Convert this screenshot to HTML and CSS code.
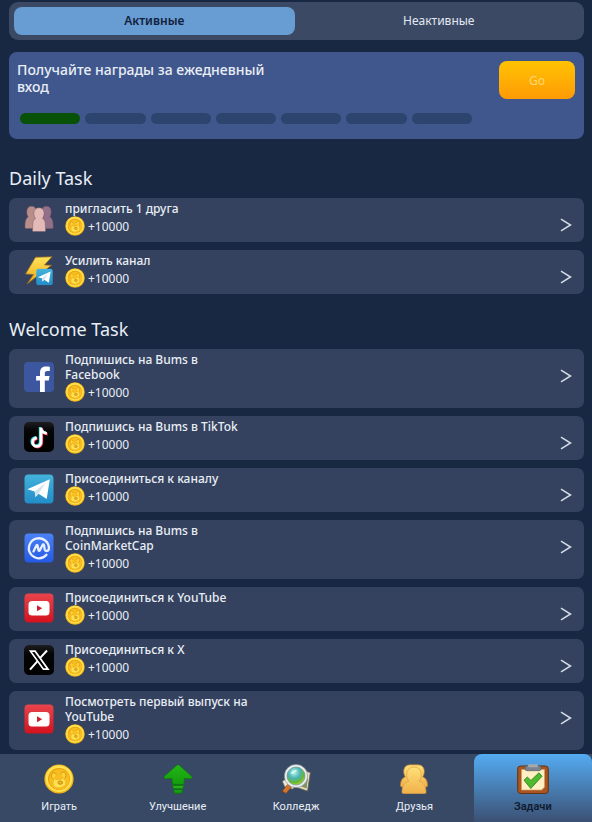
FILE: index.html
```html
<!DOCTYPE html>
<html lang="ru">
<head>
<meta charset="utf-8">
<meta name="viewport" content="width=device-width, initial-scale=1">
<title>Задачи</title>
<link rel="stylesheet" href="styles.css">
</head>
<body>
<svg class="sprite" aria-hidden="true">
  <defs>
    <linearGradient id="g-tg" x1="0" y1="0" x2="0" y2="1"><stop offset="0" stop-color="#43b3dc"/><stop offset="1" stop-color="#238cc7"/></linearGradient>
    <linearGradient id="g-cmc" x1="0" y1="0" x2="0" y2="1"><stop offset="0" stop-color="#4b82f5"/><stop offset="1" stop-color="#2459e4"/></linearGradient>
    <linearGradient id="g-yt" x1="0" y1="0" x2="0" y2="1"><stop offset="0" stop-color="#e9444c"/><stop offset="1" stop-color="#d4121e"/></linearGradient>
    <linearGradient id="g-black" x1="0" y1="0" x2="0" y2="1"><stop offset="0" stop-color="#1d1d20"/><stop offset="0.3" stop-color="#050506"/><stop offset="1" stop-color="#000"/></linearGradient>
    <linearGradient id="g-bolt" x1="0" y1="0" x2="0" y2="1"><stop offset="0" stop-color="#ffe25a"/><stop offset="1" stop-color="#eda915"/></linearGradient>
    <linearGradient id="g-gold" x1="0" y1="0" x2="0" y2="1"><stop offset="0" stop-color="#ffdf78"/><stop offset="1" stop-color="#f1b14a"/></linearGradient>
    <linearGradient id="g-green" x1="0" y1="0" x2="0" y2="1"><stop offset="0" stop-color="#25b518"/><stop offset="1" stop-color="#129c0b"/></linearGradient>
    <radialGradient id="g-lens" cx="0.4" cy="0.3" r="0.75"><stop offset="0" stop-color="#b7f4e5"/><stop offset="0.45" stop-color="#4ab3b5"/><stop offset="0.75" stop-color="#65b92d"/><stop offset="1" stop-color="#c5d94b"/></radialGradient>
  </defs>
  <symbol id="coin" viewBox="0 0 30 30">
    <circle cx="15" cy="15" r="14.6" fill="#f3b413"/>
    <circle cx="15" cy="14.6" r="13.4" fill="#ffe152"/>
    <circle cx="15" cy="15" r="11" fill="#e9a20b"/>
    <circle cx="15.3" cy="15.4" r="10.3" fill="#f8bd20"/>
    <path d="M9.500 15c-2-1-2.800-3.500-1.200-5.500 1.400-1.600 3.700-.7 3.700 1.200M17 10.500c0-2 2-3.300 3.700-2 1.800 1.500 1.500 4.500-.1 6" fill="#ffd43a" stroke="#cf900d" stroke-width=".9"/>
    <path d="M10.500 14.500c2 1.800 5 1.700 8.800-.6 1.800 1.500 3 4 2.400 6.500-3 3.800-8.500 4.500-11.800 1.800-1.500-2-.8-5.500.6-7.700z" fill="#ffe14f" stroke="#e5ac20" stroke-width=".6"/>
    <ellipse cx="16.300" cy="18.600" rx="2.300" ry="1.700" fill="#edb420" stroke="#bd810f" stroke-width=".8"/>
  </symbol>
  <symbol id="people" viewBox="0 0 30 30">
    <g stroke="#755b64" stroke-width=".5">
      <path d="M2 24.500c-.8 0-1-.5-1-1.200 0-5.500.6-9 3.200-10.300C2 9.500 2 2.200 7.500 2.200s6 6.500 3.500 10.800c2 2 2.500 6 2.500 11.500z" fill="#b98d89"/>
      <path d="M16.500 24.500c0-5.500.5-9.500 2.500-11.500-2.500-4.300-2-10.800 3.500-10.800S28 9.500 25.800 13c2.600 1.300 3.400 4.800 3.400 10.300 0 .7-.3 1.200-1 1.200z" fill="#927089"/>
      <path d="M9.500 27.500c-.6 0-1-.4-1-1 0-1.500.3-2.500.2-4-.1-4.500.5-6.700 2.800-8C8.500 10.500 9.500 3.800 15 3.800s6.500 6.700 3.500 10.700c2.300 1.300 3 3.500 2.900 8-.1 1.500.2 2.500.2 4 0 .6-.4 1-1 1z" fill="#e4bab9"/>
    </g>
  </symbol>
  <symbol id="plane" viewBox="0 0 30 30">
    <rect x=".5" y=".5" width="29" height="29" rx="4" fill="url(#g-tg)"/>
    <path d="M3.300 15.300 25.800 5.200 22.700 25 14.500 19.700l-3 3.300-.8-5.600z" fill="#fff"/>
    <path d="M10.700 17.400 21.500 9l-7 10.700-3 3.300z" fill="#cfe3ef"/>
  </symbol>
  <symbol id="boost" viewBox="0 0 30 30">
    <path d="M11.500 1.200 28 .8 20.500 9l7 .3L3 28l6.500-9.500L1.500 18z" fill="url(#g-bolt)" stroke="#936c24" stroke-width=".8"/>
    <use href="#plane" x="12" y="12.500" width="17" height="17"/>
  </symbol>
  <symbol id="facebook" viewBox="0 0 30 30">
    <rect width="30" height="30" rx="4" fill="#3c57a0"/>
    <path d="M16 30V18.600h-3.900v-4.500H16v-3.400C16 6.500 18.500 4.600 22.200 4.600c1.700 0 3.100.2 3.600.3v4.200h-2.500c-2 0-2.500.9-2.500 2.300v2.700h4.700l-.7 4.500h-4V30z" fill="#fff"/>
  </symbol>
  <symbol id="tiktok" viewBox="0 0 30 30">
    <rect width="30" height="30" rx="5" fill="url(#g-black)"/>
    <g fill="none" stroke-width="2.800">
      <path d="M16.200 5v14.500a4.200 4.200 0 1 1-4.200-4.200M16.200 5.500c.4 3.200 2.700 5 5.800 5.200" stroke="#35d9db"/>
      <path d="M17.800 6.400v14.500a4.200 4.200 0 1 1-4.200-4.200M17.800 6.900c.4 3.200 2.700 5 5.800 5.200" stroke="#ed3158"/>
      <path d="M17 5.700v14.500a4.200 4.200 0 1 1-4.200-4.200M17 6.200c.4 3.200 2.700 5 5.800 5.200" stroke="#fff"/>
    </g>
  </symbol>
  <symbol id="cmc" viewBox="0 0 30 30">
    <rect x=".5" y=".5" width="29" height="29" rx="4" fill="url(#g-cmc)"/>
    <path d="M22.500 21.800a10 10 0 1 1 2.400-6.500c0 3.200-3.900 3.700-4.300.8l-.5-3.700c-.2-1.300-1.200-1.300-1.700-.2l-2.500 5c-.5.900-1.300.8-1.500-.2l-.7-4c-.2-1.300-1.100-1.300-1.600-.1L9.500 18.400" fill="none" stroke="#e6eeff" stroke-width="2.300" stroke-linecap="round" stroke-linejoin="round"/>
  </symbol>
  <symbol id="youtube" viewBox="0 0 30 30">
    <rect x=".5" y=".5" width="29" height="29" rx="4" fill="url(#g-yt)"/>
    <rect x="4.500" y="8" width="21" height="14.500" rx="3.500" fill="#fff"/>
    <path d="M13 12.200v6l5.200-3z" fill="#cf1d2d"/>
  </symbol>
  <symbol id="x-logo" viewBox="0 0 30 30">
    <rect width="30" height="30" rx="5" fill="url(#g-black)"/>
    <path d="M6.500 6.200h4.600L24 24.200h-4.600z" fill="none" stroke="#fff" stroke-width="1.700"/>
    <path d="M23 5.500l-7 7.700M13.300 16.300 6 24.700" stroke="#fff" stroke-width="2"/>
  </symbol>
  <symbol id="upgrade" viewBox="0 0 30 30">
    <g fill="url(#g-green)" stroke="#0b7409" stroke-width=".7" stroke-linejoin="round">
      <path d="M13.500 1.500c1-.9 2-.9 3 0L28.800 12.500c.8.900.2 2.100-.8 2.300l-6.500-.3-.7 6H9.600l-.7-6-7.100.2c-1-.7-1.100-1.700-.5-2.400z"/>
      <path d="M9.600 21.500h11.200l-1 3.200h-9.300zM10.600 25.700h9.200l-1 3.500h-7.300z"/>
    </g>
  </symbol>
  <symbol id="search-globe" viewBox="0 0 30 30">
    <path d="M18 5.500 29.300 8.500 26.500 27 13 22.500z" fill="#e8e3c4" stroke="#706752" stroke-width=".8"/>
    <path d="M19 19l8-5-1.400 10.500-7-2.500z" fill="#829166"/>
    <path d="M1.500 17.500 6 14l7 7-1 4-8-2z" fill="#f0e7d3" stroke="#8b8173" stroke-width=".6"/>
    <path d="M6.500 20.500 10.500 23 5 29.500 1.300 27z" fill="#d2762b" stroke="#82401a" stroke-width=".6"/>
    <circle cx="15" cy="12" r="11.600" fill="#e9eff0" stroke="#7a888c" stroke-width=".6"/>
    <circle cx="15" cy="12" r="9" fill="url(#g-lens)" stroke="#748987" stroke-width=".7"/>
    <path d="M9.500 9.500c1.300-3 4.500-4 6.500-3.500-1 2-3 2-3.500 4z" fill="#e4fffb" opacity=".8"/>
  </symbol>
  <symbol id="friends" viewBox="0 0 30 30">
    <g fill="url(#g-gold)" stroke="#b97930" stroke-width=".7">
      <path d="M3 23c-1.200 0-1.700-.8-1.600-2 .2-4.500 1.800-7 4.800-8.300C3.500 9 4 1 10.500.8h9C26 1 26.500 9 23.800 12.700c3 1.300 4.600 3.800 4.800 8.300.1 1.200-.4 2-1.600 2z"/>
      <path d="M4.500 29.500c-1.200 0-1.600-.7-1.500-1.800.3-5.700 2.500-9.200 7-10.700C5.800 13 7 3 15 3s9.200 10 5 14c4.500 1.500 6.700 5 7 10.700.1 1.100-.3 1.800-1.500 1.800z" stroke="#d9a04a"/>
    </g>
  </symbol>
  <symbol id="clipboard" viewBox="0 0 32 30">
    <rect x=".7" y="2" width="30.600" height="27.500" rx="3" fill="#a85520" stroke="#633313"/>
    <path d="M4.500 5.500h23v17.700L24.500 26h-20z" fill="#fff0c4" stroke="#d79d61" stroke-width=".7"/>
    <rect x="8" y="1.700" width="16" height="5" rx="2" fill="#7c838c" stroke="#535b65" stroke-width=".7"/>
    <rect x="11" y=".3" width="10" height="3" rx="1.300" fill="#a4a9ae"/>
    <path d="M7 16.200 10.300 13l3.600 3.400L22 8.800l3 3.500-11.200 12.200z" fill="#4dba2f" stroke="#287919" stroke-width=".8" stroke-linejoin="round"/>
  </symbol>
  <symbol id="chevron" viewBox="0 0 12 14">
    <path d="M1 1.200 10.500 7 1 12.800" fill="none" stroke="#d5dbe6" stroke-width="1.500"/>
  </symbol>
</svg>

<main class="page">
  <div class="tabs">
    <button class="tab tab-active" type="button">Активные</button>
    <button class="tab" type="button">Неактивные</button>
  </div>

  <section class="daily">
    <div class="daily-head">
      <h2 class="daily-title">Получайте награды за ежедневный вход</h2>
      <button class="go" type="button">Go</button>
    </div>
    <div class="days">
      <span class="day day-done"></span><span class="day"></span><span class="day"></span><span class="day"></span><span class="day"></span><span class="day"></span><span class="day"></span>
    </div>
  </section>

  <h2 class="section-title">Daily Task</h2>
  <div class="tasks">
    <a class="task" href="#"><svg class="task-icon"><use href="#people"/></svg><span class="task-text"><span class="task-name">пригласить 1 друга</span><span class="reward"><svg class="coin"><use href="#coin"/></svg>+10000</span></span><svg class="chevron"><use href="#chevron"/></svg></a>
    <a class="task" href="#"><svg class="task-icon"><use href="#boost"/></svg><span class="task-text"><span class="task-name">Усилить канал</span><span class="reward"><svg class="coin"><use href="#coin"/></svg>+10000</span></span><svg class="chevron"><use href="#chevron"/></svg></a>
  </div>

  <h2 class="section-title">Welcome Task</h2>
  <div class="tasks">
    <a class="task" href="#"><svg class="task-icon"><use href="#facebook"/></svg><span class="task-text"><span class="task-name">Подпишись на Bums в Facebook</span><span class="reward"><svg class="coin"><use href="#coin"/></svg>+10000</span></span><svg class="chevron"><use href="#chevron"/></svg></a>
    <a class="task" href="#"><svg class="task-icon"><use href="#tiktok"/></svg><span class="task-text"><span class="task-name">Подпишись на Bums в TikTok</span><span class="reward"><svg class="coin"><use href="#coin"/></svg>+10000</span></span><svg class="chevron"><use href="#chevron"/></svg></a>
    <a class="task" href="#"><svg class="task-icon"><use href="#plane"/></svg><span class="task-text"><span class="task-name">Присоединиться к каналу</span><span class="reward"><svg class="coin"><use href="#coin"/></svg>+10000</span></span><svg class="chevron"><use href="#chevron"/></svg></a>
    <a class="task" href="#"><svg class="task-icon"><use href="#cmc"/></svg><span class="task-text"><span class="task-name">Подпишись на Bums в CoinMarketCap</span><span class="reward"><svg class="coin"><use href="#coin"/></svg>+10000</span></span><svg class="chevron"><use href="#chevron"/></svg></a>
    <a class="task" href="#"><svg class="task-icon"><use href="#youtube"/></svg><span class="task-text"><span class="task-name">Присоединиться к YouTube</span><span class="reward"><svg class="coin"><use href="#coin"/></svg>+10000</span></span><svg class="chevron"><use href="#chevron"/></svg></a>
    <a class="task" href="#"><svg class="task-icon"><use href="#x-logo"/></svg><span class="task-text"><span class="task-name">Присоединиться к X</span><span class="reward"><svg class="coin"><use href="#coin"/></svg>+10000</span></span><svg class="chevron"><use href="#chevron"/></svg></a>
    <a class="task" href="#"><svg class="task-icon"><use href="#youtube"/></svg><span class="task-text"><span class="task-name">Посмотреть первый выпуск на YouTube</span><span class="reward"><svg class="coin"><use href="#coin"/></svg>+10000</span></span><svg class="chevron"><use href="#chevron"/></svg></a>
  </div>
</main>

<nav class="nav">
  <a class="nav-item" href="#"><svg class="nav-icon"><use href="#coin"/></svg>Играть</a>
  <a class="nav-item" href="#"><svg class="nav-icon"><use href="#upgrade"/></svg>Улучшение</a>
  <a class="nav-item" href="#"><svg class="nav-icon"><use href="#search-globe"/></svg>Колледж</a>
  <a class="nav-item" href="#"><svg class="nav-icon"><use href="#friends"/></svg>Друзья</a>
  <a class="nav-item nav-active" href="#"><svg class="nav-icon"><use href="#clipboard"/></svg>Задачи</a>
</nav>
</body>
</html>
```
FILE: styles.css
```css
* { box-sizing: border-box; }
body {
  margin: 0;
  background: #182843;
  color: #e9eef5;
  font-family: "Noto Sans", "Open Sans", sans-serif;
}
.sprite { position: absolute; width: 0; height: 0; }
a { color: inherit; text-decoration: none; }
button { border: 0; font-family: inherit; cursor: pointer; }
.page { padding: 2px 8px 4px 9px; }

.tabs {
  display: grid;
  grid-template-columns: 1fr 1fr;
  gap: 4px;
  padding: 5px;
  border-radius: 9px;
  background: #3c4965;
}
.tab {
  height: 28px;
  padding: 0 0 2px;
  border-radius: 8px;
  background: none;
  color: #e2e8f1;
  font-size: 12px;
}
.tab-active { background: #689dd3; color: #13213c; font-weight: 600; }

.daily {
  margin-top: 12px;
  padding: 9px 9px 15px 8px;
  border-radius: 8px;
  background: #40578e;
}
.daily-head { display: flex; justify-content: space-between; align-items: flex-start; }
.daily-title {
  max-width: 260px;
  margin: 0;
  font-size: 14px;
  font-weight: 500;
  line-height: 17px;
}
.go {
  width: 76px;
  height: 38px;
  border-radius: 8px;
  background: linear-gradient(#ffc303, #ff9a05);
  color: #ffda70;
  font-size: 12px;
}
.days {
  display: grid;
  grid-template-columns: repeat(7, 1fr);
  gap: 5px;
  width: 81%;
  margin: 14px 0 0 3px;
}
.day { height: 11px; border-radius: 6px; background: #2c446e; }
.day-done { background: #085208; }

.section-title {
  margin: 27px 0 8px;
  font-size: 18px;
  font-weight: 400;
  line-height: 24px;
}
.tasks { display: grid; gap: 8px; }
.tasks + .section-title { margin-top: 23px; }
.task {
  display: flex;
  align-items: center;
  gap: 11px;
  padding: 3px 12px 6px 15px;
  border-radius: 7px;
  background: #34425f;
}
.task-icon { flex: none; width: 30px; height: 30px; }
.task-text { flex: 1; }
.task-name {
  display: block;
  max-width: 190px;
  font-size: 12px;
  font-weight: 500;
  line-height: 15px;
}
.reward { display: flex; align-items: center; gap: 3px; height: 20px; font-size: 12px; }
.coin { width: 20px; height: 20px; }
.chevron { align-self: flex-start; width: 12px; height: 14px; margin-top: 17px; }

.nav {
  position: sticky;
  bottom: 0;
  display: grid;
  grid-template-columns: repeat(5, 1fr);
  background: #384966;
}
.nav-item {
  display: flex;
  flex-direction: column;
  align-items: center;
  gap: 5px;
  padding: 10px 0 8px;
  font-family: Roboto, sans-serif;
  font-size: 11px;
  line-height: 16px;
}
.nav-icon { width: 32px; height: 30px; }
.nav-active {
  border-radius: 8px 8px 0 0;
  background: linear-gradient(#54abf2, #3b4f71);
  color: #101b2e;
  font-weight: 600;
}
```
